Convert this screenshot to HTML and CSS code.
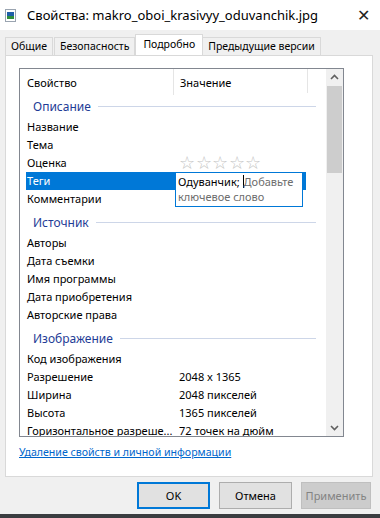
FILE: index.html
```html
<!DOCTYPE html>
<html lang="ru">
<head>
  <meta charset="UTF-8" />
  <title>Свойства</title>
  <link rel="stylesheet" href="styles.css">
</head>
<body>

<div class="window">
  <div class="titlebar">
    <svg class="file-icon" width="11" height="13" viewBox="0 0 11 13">
      <rect x="0.5" y="0.5" width="10" height="12" fill="#fff" stroke="#9aa4b0"/>
      <rect x="2" y="3" width="7" height="7" fill="#1f5fa8"/>
      <rect x="2" y="7" width="7" height="3" fill="#2f8f3c"/>
    </svg>
    <span class="title">Свойства: makro_oboi_krasivyy_oduvanchik.jpg</span>
    <span class="close">✕</span>
  </div>

  <div class="tabs">
    <div class="tab">Общие</div>
    <div class="tab">Безопасность</div>
    <div class="tab active">Подробно</div>
    <div class="tab">Предыдущие версии</div>
  </div>

  <div class="panel">
    <div class="list">
      <div class="list-body">
        <div class="head">
          <div class="col-name">Свойство</div>
          <div class="col-value">Значение</div>
          <div class="col-rest"></div>
        </div>

        <div class="group"><span>Описание</span></div>
        <div class="row"><div class="col-name">Название</div></div>
        <div class="row"><div class="col-name">Тема</div></div>
        <div class="row">
          <div class="col-name">Оценка</div>
          <div class="col-value stars">☆☆☆☆☆</div>
        </div>
        <div class="row selected">
          <div class="col-name">Теги</div>
          <div class="editor">
            <span class="tag">Одуванчик;</span> <span class="caret"></span>Добавьте ключевое слово
          </div>
        </div>
        <div class="row"><div class="col-name">Комментарии</div></div>

        <div class="group"><span>Источник</span></div>
        <div class="row"><div class="col-name">Авторы</div></div>
        <div class="row"><div class="col-name">Дата съемки</div></div>
        <div class="row"><div class="col-name">Имя программы</div></div>
        <div class="row"><div class="col-name">Дата приобретения</div></div>
        <div class="row"><div class="col-name">Авторские права</div></div>

        <div class="group"><span>Изображение</span></div>
        <div class="row"><div class="col-name">Код изображения</div></div>
        <div class="row"><div class="col-name">Разрешение</div><div class="col-value">2048 x 1365</div></div>
        <div class="row"><div class="col-name">Ширина</div><div class="col-value">2048 пикселей</div></div>
        <div class="row"><div class="col-name">Высота</div><div class="col-value">1365 пикселей</div></div>
        <div class="row"><div class="col-name">Горизонтальное разреше...</div><div class="col-value">72 точек на дюйм</div></div>
      </div>
      <div class="scrollbar">
        <svg class="arrow" width="17" height="17" viewBox="0 0 17 17">
          <path d="M5 10 L8.5 6.5 L12 10" fill="none" stroke="#606060" stroke-width="1.6"/>
        </svg>
        <div class="thumb"></div>
        <div class="track"></div>
        <svg class="arrow" width="17" height="17" viewBox="0 0 17 17">
          <path d="M5 7 L8.5 10.5 L12 7" fill="none" stroke="#606060" stroke-width="1.6"/>
        </svg>
      </div>
    </div>

    <a class="remove-link" href="#">Удаление свойств и личной информации</a>
  </div>

  <div class="buttons">
    <button class="btn default">OK</button>
    <button class="btn">Отмена</button>
    <button class="btn" disabled>Применить</button>
  </div>
</div>

</body>
</html>
```

FILE: styles.css
```css
body {
  margin: 0;
  font-family: "Noto Sans", "Open Sans", sans-serif;
  font-size: 11px;
  color: #000;
  background: #f0f0f0;
}
.window {
  width: 380px;
  height: 518px;
  box-sizing: border-box;
  border-bottom: 4px solid #3a3d40;
  background: #f0f0f0;
}
.titlebar {
  height: 30px;
  display: flex;
  align-items: center;
  background: #fff;
  padding-left: 5px;
}
.file-icon {
  margin-right: 11px;
}
.title {
  flex: 1;
  font-size: 13px;
}
.close {
  width: 34px;
  text-align: center;
  font-size: 16px;
  color: #222;
}
.tabs {
  display: flex;
  align-items: flex-end;
  height: 25px;
  padding: 0 0 0 5px;
}
.tab {
  height: 17px;
  line-height: 17px;
  padding: 0 5px;
  border: 1px solid #d9d9d9;
  border-bottom: none;
  margin-right: 1px;
  background: #f0f0f0;
  color: #000;
  font-size: 10.5px;
}
.tab.active {
  height: 20px;
  line-height: 18px;
  background: #fff;
  padding: 0 7px;
  margin: 0 -1px 0 -1px;
  position: relative;
  z-index: 1;
}
.panel {
  margin: 0 7px 0 5px;
  height: 422px;
  box-sizing: border-box;
  background: #fff;
  border: 1px solid #d9d9d9;
  padding: 12px 0 0 13px;
}
.list {
  width: 325px;
  height: 369px;
  box-sizing: border-box;
  border: 1px solid #828790;
  display: flex;
  overflow: hidden;
}
.list-body {
  flex: 1;
  overflow: hidden;
  padding-left: 6px;
}
.head {
  display: flex;
  height: 26px;
  line-height: 28px;
}
.head .col-name {
  border-right: 1px solid #e5e5e5;
}
.head .col-rest {
  width: 0;
  height: 24px;
  border-right: 1px solid #e5e5e5;
}
.col-name {
  width: 146px;
  padding-left: 1px;
  white-space: nowrap;
  overflow: hidden;
}
.col-value {
  padding-left: 6px;
  width: 127px;
  white-space: nowrap;
}
.group {
  display: flex;
  align-items: center;
  height: 23px;
  padding: 0 10px 1px 7px;
  box-sizing: border-box;
  color: #1e3c96;
  font-size: 12px;
}
.row + .group {
  margin-top: 3px;
}
.group::after {
  content: "";
  flex: 1;
  height: 1px;
  margin-left: 7px;
  background: #cdd6e8;
}
.row {
  display: flex;
  height: 18px;
  line-height: 18px;
  position: relative;
}
.row.selected {
  background: #0078d7;
  color: #fff;
  margin-right: 20px;
}
.stars {
  color: #c4c4c4;
  font-size: 18px;
  letter-spacing: 0.5px;
  line-height: 17px;
}
.editor {
  position: absolute;
  left: 149px;
  top: 0;
  width: 122px;
  height: 31px;
  background: #fff;
  border: 1px solid #0078d7;
  color: #6d6d6d;
  line-height: 15px;
  padding: 1px 2px;
  z-index: 2;
}
.tag {
  color: #000;
}
.caret {
  display: inline-block;
  width: 1px;
  height: 13px;
  background: #000;
  vertical-align: -2px;
}
.scrollbar {
  width: 17px;
  display: flex;
  flex-direction: column;
  background: #f0f0f0;
}
.arrow {
  display: block;
}
.thumb {
  height: 87px;
  margin: 0 1px;
  background: #cdcdcd;
}
.track {
  flex: 1;
}
.remove-link {
  display: inline-block;
  margin: 8px 0 0 0;
  color: #0066cc;
  text-decoration: underline;
  font-size: 10.6px;
}
.buttons {
  display: flex;
  justify-content: flex-end;
  gap: 9px;
  padding: 5px 9px 0 0;
}
.btn {
  width: 73px;
  height: 27px;
  font-family: inherit;
  font-size: 11px;
  background: #e1e1e1;
  border: 1px solid #adadad;
  color: #000;
  padding: 0;
}
.btn.default {
  border: 2px solid #0078d7;
}
.btn:disabled {
  background: #cccccc;
  border-color: #bfbfbf;
  color: #838383;
  width: 70px;
}
```
